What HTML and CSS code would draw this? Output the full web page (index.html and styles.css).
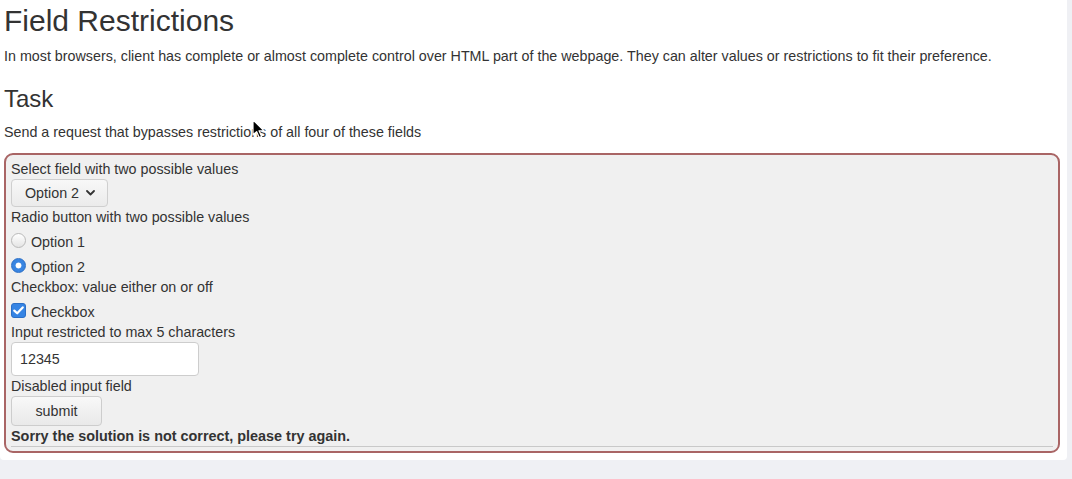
FILE: index.html
```html
<!DOCTYPE html>
<html lang="en">
<head>
<meta charset="utf-8">
<title>Field Restrictions</title>
<link rel="stylesheet" href="styles.css">
</head>
<body>
<div class="page">
  <h1 class="title">Field Restrictions</h1>
  <p class="intro">In most browsers, client has complete or almost complete control over HTML part of the webpage. They can alter values or restrictions to fit their preference.</p>
  <h2 class="subtitle">Task</h2>
  <p class="task">Send a request that bypasses restrictions of all four of these fields</p>
  <form class="challenge">
    <div class="label">Select field with two possible values</div>
    <div class="select">
      <span>Option 2</span>
      <svg class="chevron" width="9" height="6" viewBox="0 0 9 6"><path d="M1 1 L4.5 4.5 L8 1" fill="none" stroke="#333" stroke-width="1.8" stroke-linecap="round" stroke-linejoin="round"/></svg>
    </div>
    <div class="label">Radio button with two possible values</div>
    <label class="choice"><span class="radio"></span>Option 1</label>
    <label class="choice"><span class="radio checked"></span>Option 2</label>
    <div class="label">Checkbox: value either on or off</div>
    <label class="choice"><span class="checkbox"><svg width="11" height="9" viewBox="0 0 11 9"><path d="M1.3 4.6 L4.2 7.3 L9.7 1.4" fill="none" stroke="#fff" stroke-width="2.2" stroke-linecap="round" stroke-linejoin="round"/></svg></span>Checkbox</label>
    <div class="label">Input restricted to max 5 characters</div>
    <div class="text-input">12345</div>
    <div class="label">Disabled input field</div>
    <div class="submit">submit</div>
    <div class="result">Sorry the solution is not correct, please try again.</div>
    <div class="rule"></div>
  </form>
  <svg class="cursor" width="14" height="21" viewBox="0 0 14 21"><path d="M1 1 L1 16 L4.6 12.6 L7.2 18.6 L9.6 17.6 L7 11.8 L12 11.8 Z" fill="#000" stroke="#fff" stroke-width="1.2" stroke-linejoin="round"/></svg>
</div>
</body>
</html>
```

FILE: styles.css
```css
html, body {
  margin: 0;
  padding: 0;
  background: #eff0f4;
}

body {
  font-family: "Liberation Sans", Arial, sans-serif;
  font-size: 14.3px;
  line-height: 20px;
  color: #333;
}

.page {
  position: relative;
  width: 1067px;
  box-sizing: border-box;
  background: #fff;
  padding: 4px 7px 7px 4px;
  border-radius: 0 0 4px 4px;
}

.title {
  margin: 0;
  font-size: 30px;
  line-height: 33px;
  font-weight: normal;
}

.intro {
  margin: 9px 0 0;
}

.subtitle {
  margin: 20px 0 0;
  font-size: 24px;
  line-height: 26px;
  font-weight: normal;
}

.task {
  margin: 10px 0 0;
}

.challenge {
  margin: 11px 0 0;
  border: 2px solid #a96565;
  border-radius: 9px;
  background: #f0f0f0;
  padding: 4px 5px 4px 5px;
}

.label {
  height: 20px;
}

.select {
  display: flex;
  align-items: center;
  width: 97px;
  height: 28px;
  box-sizing: border-box;
  padding: 0 0 0 13px;
  border: 1px solid #cfcfcf;
  border-radius: 4px;
  background: linear-gradient(#f8f8f8, #ebebeb);
}

.chevron {
  margin-left: 7px;
}

.choice {
  display: flex;
  align-items: flex-start;
  height: 25px;
  box-sizing: border-box;
  padding-top: 5px;
}

.radio {
  width: 15px;
  height: 15px;
  box-sizing: border-box;
  margin: 1px 5px 0 0;
  border-radius: 50%;
  border: 1px solid #b9b9b9;
  background: linear-gradient(#ffffff, #e4e4e4);
}

.radio.checked {
  border: 1px solid #2b6fc6;
  background: radial-gradient(circle, #fff 0, #fff 2.6px, #3a86e2 3.3px, #3582e0 100%);
}

.checkbox {
  display: flex;
  align-items: center;
  justify-content: center;
  width: 15px;
  height: 15px;
  box-sizing: border-box;
  margin: 1px 5px 0 0;
  border-radius: 3px;
  border: 1px solid #2b6fc6;
  background: #3584e4;
}

.text-input {
  width: 188px;
  height: 34px;
  box-sizing: border-box;
  border: 1px solid #cdcdcd;
  border-radius: 4px;
  background: #fff;
  padding: 6px 8px;
}

.submit {
  width: 91px;
  height: 30px;
  box-sizing: border-box;
  border: 1px solid #cdcdcd;
  border-radius: 4px;
  background: linear-gradient(#f8f8f8, #e9e9e9);
  text-align: center;
  line-height: 28px;
}

.result {
  font-weight: bold;
  font-size: 14.4px;
  height: 20px;
}

.rule {
  height: 1px;
  background: #c9c9c9;
}

.cursor {
  position: absolute;
  left: 252px;
  top: 119px;
}
```
